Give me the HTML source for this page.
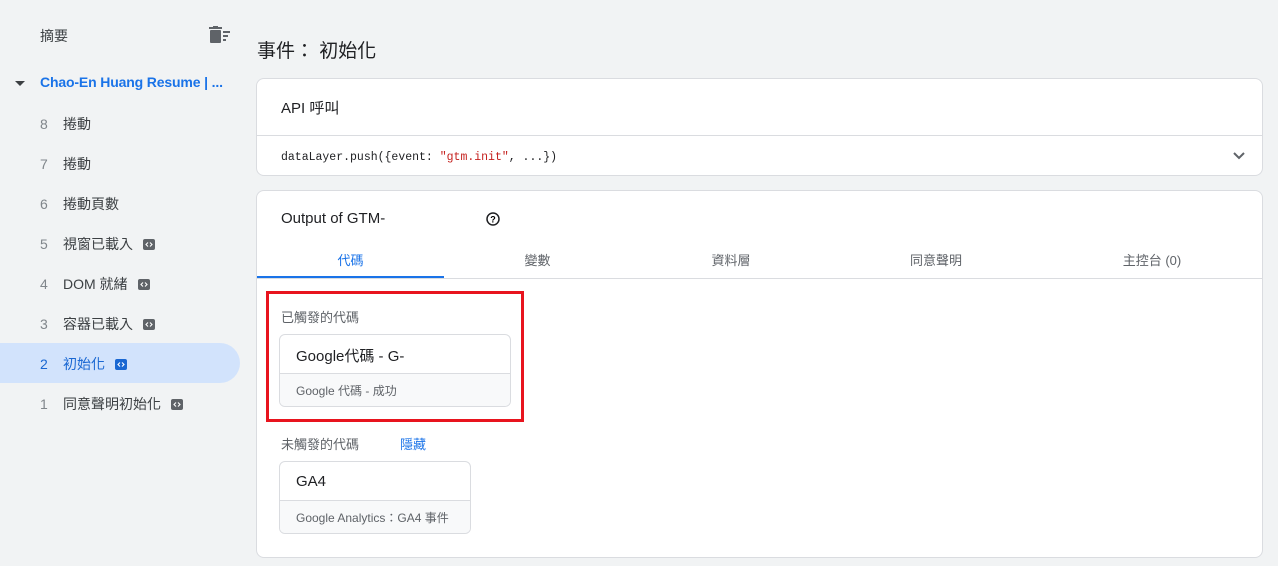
<!DOCTYPE html>
<html><head><meta charset="utf-8"><style>
*{box-sizing:border-box;margin:0;padding:0}
body{width:1278px;height:566px;overflow:hidden;background:#f1f3f4;font-family:"Liberation Sans","Noto Sans CJK TC",sans-serif;color:#202124;position:relative}
.a{position:absolute}
.side{font-size:14px;color:#3c4043}
.side .n{display:inline-block;width:23px;color:#80868b}
.badge{display:inline-block;width:12px;height:11px;background:#5f6368;border-radius:2px;vertical-align:middle;margin-left:10px;position:relative;top:-1px}
.badge svg{display:block}
.card{position:absolute;background:#fff;border:1px solid #dadce0;border-radius:8px}
.tag{position:absolute;border:1px solid #dadce0;border-radius:6px;overflow:hidden;background:#fff}
.tag .t{height:39px;padding:11px 16px;font-size:15px;color:#202124;border-bottom:1px solid #dadce0}
.tag .s{height:32px;background:#f8f9fa;padding:8px 16px;font-size:12px;color:#5f6368}
</style></head><body>
<div class="a side" style="left:40px;top:26px">摘要</div>
<svg class="a" style="left:209px;top:26px" width="22" height="18" viewBox="0 0 22 18"><rect x="1" y="4" width="11" height="13" rx="1" fill="#5f6368"/><rect x="0" y="1" width="13" height="2" fill="#5f6368"/><rect x="4" y="0" width="5" height="2" fill="#5f6368"/><rect x="14" y="5" width="7" height="2" fill="#5f6368"/><rect x="14" y="9" width="5" height="2" fill="#5f6368"/><rect x="14" y="13" width="3" height="2" fill="#5f6368"/></svg>
<svg class="a" style="left:15px;top:81px" width="10" height="6"><path d="M0 0L10 0L5 5Z" fill="#3c4043"/></svg>
<div class="a" style="left:40px;top:74px;font-size:14px;font-weight:bold;color:#1a73e8;letter-spacing:-0.15px">Chao-En Huang Resume | ...</div>
<div class="a" style="left:0;top:343px;width:240px;height:40px;background:#d2e3fc;border-radius:0 20px 20px 0"></div>
<div class="a side" style="left:40px;top:114px"><span class="n">8</span>捲動</div>
<div class="a side" style="left:40px;top:154px"><span class="n">7</span>捲動</div>
<div class="a side" style="left:40px;top:194px"><span class="n">6</span>捲動頁數</div>
<div class="a side" style="left:40px;top:234px"><span class="n">5</span>視窗已載入<span class="badge"><svg width="12" height="11"><path d="M5 3.5L3 5.5L5 7.5M7 3.5L9 5.5L7 7.5" stroke="#fff" stroke-width="1.1" fill="none"/></svg></span></div>
<div class="a side" style="left:40px;top:274px"><span class="n">4</span>DOM 就緒<span class="badge"><svg width="12" height="11"><path d="M5 3.5L3 5.5L5 7.5M7 3.5L9 5.5L7 7.5" stroke="#fff" stroke-width="1.1" fill="none"/></svg></span></div>
<div class="a side" style="left:40px;top:314px"><span class="n">3</span>容器已載入<span class="badge"><svg width="12" height="11"><path d="M5 3.5L3 5.5L5 7.5M7 3.5L9 5.5L7 7.5" stroke="#fff" stroke-width="1.1" fill="none"/></svg></span></div>
<div class="a side" style="left:40px;top:354px;color:#1967d2"><span class="n" style="color:#1967d2">2</span>初始化<span class="badge" style="background:#1967d2"><svg width="12" height="11"><path d="M5 3.5L3 5.5L5 7.5M7 3.5L9 5.5L7 7.5" stroke="#fff" stroke-width="1.1" fill="none"/></svg></span></div>
<div class="a side" style="left:40px;top:394px"><span class="n">1</span>同意聲明初始化<span class="badge"><svg width="12" height="11"><path d="M5 3.5L3 5.5L5 7.5M7 3.5L9 5.5L7 7.5" stroke="#fff" stroke-width="1.1" fill="none"/></svg></span></div>

<div class="a" style="left:257px;top:36px;font-size:19px">事件： 初始化</div>

<div class="card" style="left:256px;top:78px;width:1007px;height:98px">
 <div class="a" style="left:24px;top:18px;font-size:15px">API 呼叫</div>
 <div class="a" style="left:0;top:56px;width:100%;border-top:1px solid #dadce0"></div>
 <div class="a" style="left:24px;top:72px;font-size:11.5px;font-family:'Liberation Mono',monospace">dataLayer.push({event: <span style="color:#c5221f">"gtm.init"</span>, ...})</div>
 <svg class="a" style="left:976px;top:73px" width="12" height="8"><path d="M1 1L6 6L11 1" stroke="#5f6368" stroke-width="2" fill="none"/></svg>
</div>

<div class="card" style="left:256px;top:190px;width:1007px;height:368px">
 <div class="a" style="left:24px;top:19px;font-size:15px">Output of GTM-</div>
 <svg class="a" style="left:229px;top:21px" width="14" height="14"><circle cx="7" cy="7" r="6" stroke="#202124" stroke-width="1.5" fill="none"/><text x="7" y="10.5" font-size="9" text-anchor="middle" font-family="Liberation Sans" font-weight="bold">?</text></svg>
 <div class="a" style="left:0;top:87px;width:100%;border-top:1px solid #dadce0"></div>
 <div class="a" style="left:0;top:85px;width:187px;height:2px;background:#1a73e8"></div>
 <div class="a" style="left:0;top:59px;width:187px;text-align:center;font-size:13px;color:#1a73e8">代碼</div>
 <div class="a" style="left:187px;top:59px;width:187px;text-align:center;font-size:13px;color:#5f6368">變數</div>
 <div class="a" style="left:374px;top:59px;width:200px;text-align:center;font-size:13px;color:#5f6368">資料層</div>
 <div class="a" style="left:574px;top:59px;width:210px;text-align:center;font-size:13px;color:#5f6368">同意聲明</div>
 <div class="a" style="left:784px;top:59px;width:222px;text-align:center;font-size:13px;color:#5f6368">主控台 (0)</div>
</div>
<div class="a" style="left:266px;top:291px;width:258px;height:131px;border:3px solid #e8141e"></div>
<div class="a" style="left:281px;top:307px;font-size:13px;color:#5f6368">已觸發的代碼</div>
<div class="tag" style="left:279px;top:334px;width:232px;height:73px"><div class="t" style="padding-top:10px">Google代碼 - G-</div><div class="s">Google 代碼 - 成功</div></div>
<div class="a" style="left:281px;top:434px;font-size:13px;color:#5f6368">未觸發的代碼</div>
<div class="a" style="left:400px;top:434px;font-size:13px;color:#1a73e8">隱藏</div>
<div class="tag" style="left:279px;top:461px;width:192px;height:73px"><div class="t">GA4</div><div class="s">Google Analytics：GA4 事件</div></div>
</body></html>
